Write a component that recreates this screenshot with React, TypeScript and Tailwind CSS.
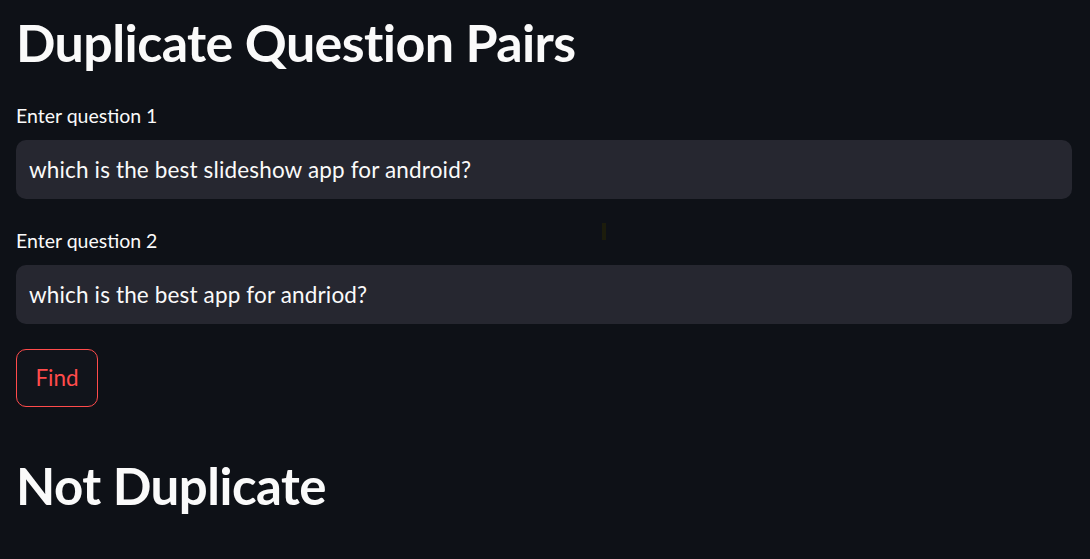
export default function App() {
  const font = { fontFamily: "Lato, 'Noto Sans', sans-serif" };
  return (
    <div className="min-h-[559px] w-full bg-[#0e1117] text-[#fafafa] relative overflow-hidden" style={font}>
      <div className="pl-4 pr-[18px] pt-[10px]">
        <h1 className="text-[52px] font-bold leading-[64px] tracking-[-0.6px]">Duplicate Question Pairs</h1>

        <div className="mt-[30px]">
          <label className="block text-[19.5px] leading-[24px]">Enter question 1</label>
          <div className="mt-[12px] h-[59px] rounded-[10px] bg-[#262730] px-[13px] flex items-center text-[22.5px] tracking-[0.15px]">
            which is the best slideshow app for android?
          </div>
        </div>

        <div className="mt-[30px]">
          <label className="block text-[19.5px] leading-[24px]">Enter question 2</label>
          <div className="mt-[12px] h-[59px] rounded-[10px] bg-[#262730] px-[13px] flex items-center text-[22.5px] tracking-[0.15px]">
            which is the best app for andriod?
          </div>
        </div>

        <button className="mt-[25px] h-[58px] w-[82px] rounded-[10px] border border-[#ff4b4b] bg-[#11141b] text-[#ff4b4b] text-[22.5px]">
          Find
        </button>

        <h2 className="mt-[46px] text-[51px] font-bold leading-[66px] tracking-[-0.5px]">Not Duplicate</h2>
      </div>
      <div className="absolute left-[602px] top-[223px] w-[4px] h-[17px] bg-[#1c1c0c]" />
    </div>
  );
}
